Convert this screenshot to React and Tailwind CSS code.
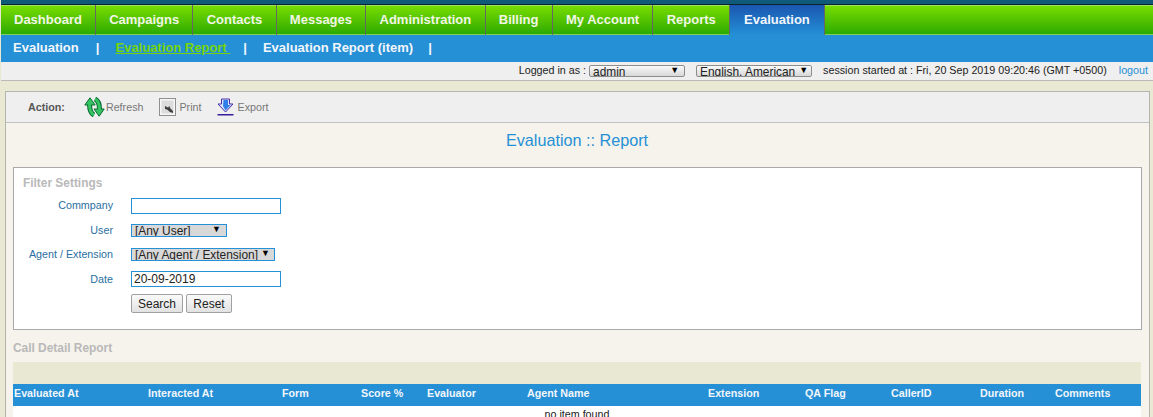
const tabs = ["Dashboard", "Campaigns", "Contacts", "Messages", "Administration", "Billing", "My Account", "Reports"];
const cols = ["Evaluated At", "Interacted At", "Form", "Score %", "Evaluator", "Agent Name", "Extension", "QA Flag", "CallerID", "Duration", "Comments"];

function RefreshIcon() {
  return (
    <svg width="21" height="20" viewBox="0 0 21 20" className="block shrink-0">
      <path d="M5.5 7 C5.5 12 6 16 10 18" fill="none" stroke="#0c6b33" strokeWidth="5" />
      <path d="M0.8 8 L6 0.8 L11.2 8 Z" fill="#35c463" stroke="#0c6b33" strokeWidth="1" strokeLinejoin="round" />
      <path d="M15.5 12 C15.5 8 15 4 11 2" fill="none" stroke="#0c6b33" strokeWidth="5" />
      <path d="M10 12 L20.2 12 L15.2 19.2 Z" fill="#35c463" stroke="#0c6b33" strokeWidth="1" strokeLinejoin="round" />
      <path d="M5.5 7 C5.5 12 6 16 10 18" fill="none" stroke="#35c463" strokeWidth="3" />
      <path d="M15.5 13 C15.5 8 15 4 11 2" fill="none" stroke="#35c463" strokeWidth="3" />
    </svg>
  );
}
function PrintIcon() {
  return (
    <svg width="17" height="18" viewBox="0 0 17 18" className="block shrink-0">
      <rect x="0.5" y="0.5" width="16" height="17" fill="#f7f7f7" stroke="#8f8f8f" />
      <rect x="2.5" y="2.5" width="12" height="13" fill="#dcdcdc" />
      <path d="M6 8 L9 9.5 L10.5 8 L11 10 L14 13 L14 15 L11 14 L8 11.5 L6 11 Z" fill="#3f3f3f" />
    </svg>
  );
}
function ExportIcon() {
  return (
    <svg width="17" height="18" viewBox="0 0 17 18" className="block shrink-0">
      <path d="M4.5 1 L12.5 1 L12.5 6 L16 6 L8.5 14 L1 6 L4.5 6 Z" fill="#d8e4ff" stroke="#4a2ea8" strokeWidth="1" />
      <path d="M6.5 2 L11 2 L11 7 L13.5 7 L8.5 12.5 L6 8 Z" fill="#2f7fe8" />
      <rect x="0.5" y="16" width="16" height="1.5" fill="#3a1d9e" />
    </svg>
  );
}
function Select({ w, h, cls, text, arrowRight }) {
  return (
    <div className={`relative shrink-0 overflow-hidden ${w} ${h} ${cls}`}>
      <select className="-mt-[1px] block h-[14px] w-full appearance-none bg-transparent pl-[3px] text-[11.9px] leading-[12px] text-[#222] outline-none">
        <option>{text}</option>
      </select>
      <span className={`pointer-events-none absolute top-[-2px] ${arrowRight} text-[9px] leading-[12px] text-black`}>▼</span>
    </div>
  );
}

export default function App() {
  return (
    <div className="h-screen overflow-hidden bg-[#e9e9d3] pl-px font-['Liberation_Sans',Arial,sans-serif]">
      <div className="h-[4px] bg-[#0f5a78]" />
      <div className="h-px bg-[#0b2530]" />
      <div className="flex h-[30px] border-t border-b border-t-[#a2e05a] border-b-[#7fcf5c] bg-gradient-to-b from-[#76dd00] to-[#2aaa00]">
        {tabs.map((t, i) => (
          <div key={t} className={`mt-[-1px] mb-[-1px] flex items-center border-r border-[#666666] pb-px text-[13px] font-bold text-[#f1f6e6] ${i === 0 ? "px-[13px]" : "px-[13.25px]"}`}>
            {t}
          </div>
        ))}
        <div className="mt-[-1px] mb-[-1px] flex items-center border-r border-[#666666] bg-gradient-to-b from-[#1b56b0] to-[#2590d6] px-[14px] pb-px text-[13px] font-bold text-[#f2f6fb]">
          Evaluation
        </div>
      </div>
      <div className="flex h-[27px] items-center bg-[#2590d6] pb-[2px] pl-[12px] text-[13px] font-bold text-[#f2f6fb]">
        <span>Evaluation</span>
        <span className="ml-[17px]">|</span>
        <span className="ml-[16px] whitespace-pre text-[#78d40a] underline">Evaluation Report </span>
        <span className="ml-[13px]">|</span>
        <span className="ml-[16px]">Evaluation Report (item)</span>
        <span className="ml-[15px]">|</span>
      </div>
      <div className="flex h-[19px] items-center justify-end border-b border-[#b9b9b9] bg-[#efefef] pr-[5px] pb-px text-[10.72px] text-[#222]">
        <span>Logged in as :</span>
        <Select w="w-[96px]" h="h-[12px]" cls="ml-[3px] rounded-[2px] border border-[#8d8d8d] bg-gradient-to-b from-[#fafafa] to-[#d8d8d8]" text="admin" arrowRight="right-[5px]" />
        <Select w="w-[116px]" h="h-[12px]" cls="ml-[11px] rounded-[2px] border border-[#8d8d8d] bg-gradient-to-b from-[#fafafa] to-[#d8d8d8]" text="English, American" arrowRight="right-[3px]" />
        <span className="ml-[11px]">session started at : Fri, 20 Sep 2019 09:20:46 (GMT +0500)</span>
        <a className="ml-[12px] text-[#2590d6]">logout</a>
      </div>

      <div className="mt-[10px] mr-[3px] ml-[4px] border border-[#b5b5b0] bg-[#f6f3ec]">
        <div className="flex h-[31px] items-center border-b border-[#c0c0c0] bg-[#efefef] text-[10.72px] text-[#777]">
          <span className="ml-[22px] font-bold text-[#555]">Action:</span>
          <span className="ml-[19px]"><RefreshIcon /></span>
          <span className="ml-px">Refresh</span>
          <span className="ml-[16px]"><PrintIcon /></span>
          <span className="ml-[3px]">Print</span>
          <span className="ml-[15px]"><ExportIcon /></span>
          <span className="ml-[4px]">Export</span>
        </div>
        <div className="flex h-[44px] items-center justify-center pr-[1px] pb-[10px] text-[16.2px] text-[#2590d6]">Evaluation :: Report</div>

        <div className="mr-[7px] ml-[7px] h-[163px] border border-[#a9a9a9] bg-white">
          <div className="h-[26px] pt-[8px] pl-[9px] text-[11.9px] leading-[14px] font-bold text-[#b9b9b9]">Filter Settings</div>
          <div className="flex h-[24px] items-center text-[10.72px] text-[#2a6f9f]">
            <span className="w-[99px] pb-[2px] text-right">Commpany</span>
            <input className="ml-[18px] h-[16px] w-[150px] border border-[#2590d6] bg-white" />
          </div>
          <div className="flex h-[24px] items-center text-[10.72px] text-[#2a6f9f]">
            <span className="w-[99px] text-right">User</span>
            <Select w="w-[96px]" h="h-[13px]" cls="ml-[18px] border border-[#2590d6] bg-[#d8d8d8]" text="[Any User]" arrowRight="right-[5px]" />
          </div>
          <div className="flex h-[24px] items-center text-[10.72px] text-[#2a6f9f]">
            <span className="w-[99px] text-right">Agent / Extension</span>
            <Select w="w-[144px]" h="h-[13px]" cls="ml-[18px] border border-[#2590d6] bg-[#d8d8d8]" text="[Any Agent / Extension]" arrowRight="right-[4px]" />
          </div>
          <div className="flex h-[26px] items-center text-[10.72px] text-[#2a6f9f]">
            <span className="w-[99px] text-right">Date</span>
            <input defaultValue="20-09-2019" className="ml-[18px] h-[16px] w-[150px] border border-[#2590d6] bg-white pl-[2px] text-[12px] text-[#222]" />
          </div>
          <div className="flex h-[24px] items-center pb-[2px] pl-[117px] text-[12px] text-[#222]">
            <button className="h-[19px] w-[52px] rounded-[2px] border border-[#a0a0a0] bg-gradient-to-b from-[#fafafa] to-[#e2e2e2]">Search</button>
            <button className="ml-[3px] h-[19px] w-[46px] rounded-[2px] border border-[#a0a0a0] bg-gradient-to-b from-[#fafafa] to-[#e2e2e2]">Reset</button>
          </div>
        </div>

        <div className="h-[32px] pt-[11px] pl-[7px] text-[11.9px] leading-[14px] font-bold text-[#b9b9b9]">Call Detail Report</div>
        <div className="mr-[8px] ml-[7px] h-[22px] bg-[#e9e9d3]" />
        <div className="mr-[8px] ml-[7px] grid h-[22px] grid-cols-[134px_134px_79px_66px_100px_181px_97px_86px_89px_75px_1fr] items-center bg-[#2590d6] pb-[3px] pl-px text-[10.72px] font-bold text-[#f2f6fb]">
          {cols.map((c) => <span key={c}>{c}</span>)}
        </div>
        <div className="mr-[8px] ml-[7px] h-[24px] bg-white text-center text-[10.72px] leading-[16px] text-[#222]">no item found</div>
      </div>
    </div>
  );
}
